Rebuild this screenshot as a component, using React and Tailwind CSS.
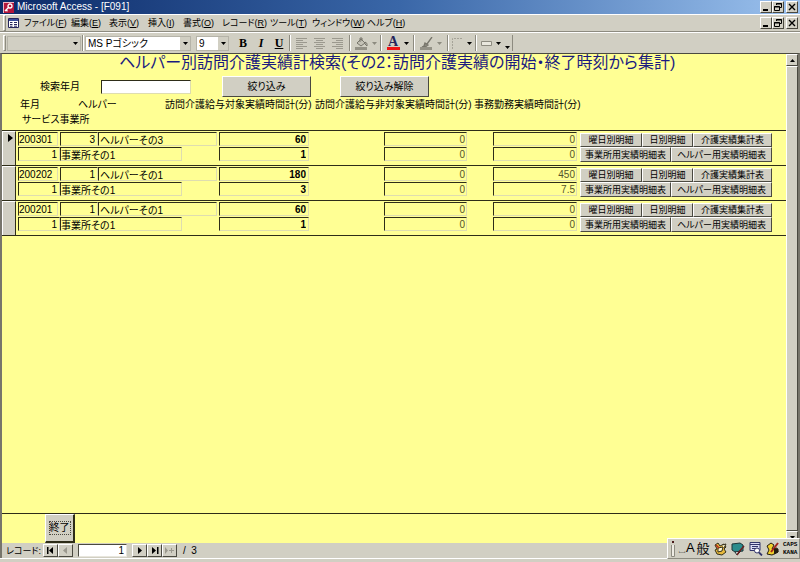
import clsx from 'clsx';

const menus = [
  { label: 'ファイル', hotkey: 'F', width: 'w-[47px]' },
  { label: '編集', hotkey: 'E', width: 'w-[38px]' },
  { label: '表示', hotkey: 'V', width: 'w-[39px]' },
  { label: '挿入', hotkey: 'I', width: 'w-[35px]' },
  { label: '書式', hotkey: 'O', width: 'w-[39px]' },
  { label: 'レコード', hotkey: 'R', width: 'w-[48px]' },
  { label: 'ツール', hotkey: 'T', width: 'w-[42px]' },
  { label: 'ウィンドウ', hotkey: 'W', width: 'w-[55px]' },
  { label: 'ヘルプ', hotkey: 'H', width: 'w-[40px]' },
];

const records = [
  { month: '200301', helperId: '3', helper: 'ヘルパーその3', officeId: '1', office: '事業所その1', covered: ['60', '1'], uncovered: ['0', '0'], clerical: ['0', '0'] },
  { month: '200202', helperId: '1', helper: 'ヘルパーその1', officeId: '1', office: '事業所その1', covered: ['180', '3'], uncovered: ['0', '0'], clerical: ['450', '7.5'] },
  { month: '200201', helperId: '1', helper: 'ヘルパーその1', officeId: '1', office: '事業所その1', covered: ['60', '1'], uncovered: ['0', '0'], clerical: ['0', '0'] },
];

const raised = 'bg-[#d1cfc3] border border-t-white border-l-white border-r-[#4a4940] border-b-[#4a4940]';

const Arrow = ({ className = 'fill-black' }) => (
  <svg viewBox="0 0 5 3" className={clsx('h-[3px] w-[5px] shrink-0', className)}>
    <path d="M0 0h5L2.5 3z" />
  </svg>
);

const Separator = () => <div className="mx-px h-4 w-0.5 shrink-0 border-l border-r border-l-[#8d8b80] border-r-white" />;

const Grip = () => <div className="h-4 w-[3px] shrink-0 border border-t-white border-l-white border-r-[#8d8b80] border-b-[#8d8b80]" />;

const WindowButtons = () => (
  <div className="flex h-[12px] shrink-0">
    <button aria-label="最小化" className={clsx(raised, 'flex w-[12px] items-end justify-center')}>
      <svg viewBox="0 0 10 10" className="h-[10px] w-[10px]"><path d="M2 7h5v2H2z" /></svg>
    </button>
    <button aria-label="元に戻す" className={clsx(raised, 'flex w-[12px] items-center justify-center')}>
      <svg viewBox="0 0 10 10" className="h-[10px] w-[10px]" fill="none" stroke="#000">
        <path d="M3.5 3V1.5h5v4H7M3 2h6M1.5 4.5h5v4h-5zM1 5h6" />
      </svg>
    </button>
    <button aria-label="閉じる" className={clsx(raised, 'ml-0.5 flex w-[12px] items-center justify-center')}>
      <svg viewBox="0 0 10 10" className="h-[10px] w-[10px]" stroke="#000" strokeWidth="1.4"><path d="M2 2l6 6M8 2L2 8" /></svg>
    </button>
  </div>
);

const TitleBar = () => (
  <div className="flex h-[14px] items-center bg-linear-to-r from-[#0d2a68] via-[#3a67a8] to-[#9cc2ee] pr-0.5 pl-[3px]">
    <svg viewBox="0 0 11 11" className="mr-[3px] h-[11px] w-[11px]">
      <path d="M0 0h11v11H0z" fill="#b3163c" />
      <path d="M0 0h11v1H1v10H0z" fill="#f0b5c2" />
      <circle cx="7" cy="4" r="2" fill="none" stroke="#fff" strokeWidth="1.3" />
      <path d="M5.5 5.5L2 9M3 8l1.5 1.3" stroke="#fff" strokeWidth="1.4" />
    </svg>
    <h1 className="flex-1 text-[10px] leading-[14px] text-white">Microsoft Access - [F091]</h1>
    <WindowButtons />
  </div>
);

const MenuBar = () => (
  <div className="flex h-[18px] items-center border-t border-b border-t-white border-b-[#8d8b80] pr-0.5 pl-[3px]">
    <Grip />
    <svg viewBox="0 0 11 10" className="mr-[5px] ml-0.5 h-[10px] w-[11px]">
      <path d="M.5 .5h10v9H.5z" fill="#fff" stroke="#26265c" />
      <path d="M1 1h9v2H1z" fill="#3b4f9c" />
      <path d="M2 4.5h2.500M2 6.500h2.500M2 8.200h2.500M6 4.500h3M6 6.500h3M6 8.200h3" stroke="#26265c" />
    </svg>
    <nav className="flex flex-1 text-[9px] leading-[14px]">
      {menus.map(menu => (
        <button key={menu.hotkey} className={clsx(menu.width, 'shrink-0 text-left whitespace-nowrap')}>
          {menu.label}(<u>{menu.hotkey}</u>)
        </button>
      ))}
    </nav>
    <WindowButtons />
  </div>
);

const Combo = ({ label, value, className }) => (
  <div className={clsx('relative h-[15px] shrink-0 border border-[#b5b3a8]', className)}>
    <select aria-label={label} className="block h-[13px] w-full appearance-none pl-0.5 text-[10px] leading-[13px] outline-none">
      <option>{value}</option>
    </select>
    <span className="pointer-events-none absolute inset-y-0 right-0 flex w-[10px] items-center justify-center bg-[#d1cfc3]">
      <Arrow />
    </span>
  </div>
);

const AlignButton = ({ label, d }) => (
  <button aria-label={label} className="flex w-[18px] justify-center">
    <svg viewBox="0 0 12 11" className="h-[11px] w-[12px]" stroke="#9b998e"><path d={d} /></svg>
  </button>
);

const Toolbar = () => (
  <div className="flex h-[21px] items-center border-t border-t-white pl-[3px]">
    <Grip />
    <Combo label="オブジェクト" value="" className="ml-px w-[74px] bg-[#d1cfc3]" />
    <Separator />
    <Combo label="フォント" value="MS Pゴシック" className="w-[106px] bg-white" />
    <Combo label="フォント サイズ" value="9" className="ml-[5px] w-[33px] bg-white" />
    <div className="ml-[5px] flex font-['Liberation_Serif',serif] text-[12px] leading-4 font-bold">
      <button className="w-[18px]">B</button>
      <button className="w-[18px] italic">I</button>
      <button className="w-[18px] underline">U</button>
    </div>
    <Separator />
    <div className="flex px-px">
      <AlignButton label="左揃え" d="M0 .5h11M0 2.500h7M0 4.500h11M0 6.500h7M0 8.500h11M0 10.500h7" />
      <AlignButton label="中央揃え" d="M0 .5h11M2 2.500h7M0 4.500h11M2 6.500h7M0 8.500h11M2 10.500h7" />
      <AlignButton label="右揃え" d="M0 .5h11M4 2.500h7M0 4.500h11M4 6.500h7M0 8.500h11M4 10.500h7" />
    </div>
    <Separator />
    <button aria-label="塗りつぶしの色" className="flex w-[27px] items-center justify-center gap-1">
      <svg viewBox="0 0 13 13" className="h-[13px] w-[13px]">
        <path d="M2 6l4-4 4 4-4 3z" fill="#c4c2b6" stroke="#77756b" />
        <path d="M5 5V1h2v3M10 5q3 1 2 4l-2-2z" fill="none" stroke="#77756b" />
        <path d="M0 10h12v3H0z" fill="#949287" />
      </svg>
      <Arrow className="fill-[#8d8b80]" />
    </button>
    <Separator />
    <button aria-label="フォントの色" className="flex w-[29px] items-center justify-center gap-1">
      <span className="h-[13px] w-[13px] border-b-3 border-[#f01414] font-['Liberation_Serif',serif] text-[14px] leading-[10px] font-bold text-[#26265c]">A</span>
      <Arrow />
    </button>
    <Separator />
    <button aria-label="線/境界線の色" className="flex w-[30px] items-center justify-center gap-1">
      <svg viewBox="0 0 13 13" className="h-[13px] w-[13px]">
        <path d="M12 0L7 7M5 6l3 2-3 2H2l2-1z" fill="#8d8b80" stroke="#77756b" strokeWidth="1.3" />
        <path d="M0 10h12v3H0z" fill="#949287" />
      </svg>
      <Arrow className="fill-[#8d8b80]" />
    </button>
    <Separator />
    <button aria-label="線/境界線の幅" className="flex w-[24px] items-center justify-center gap-1">
      <svg viewBox="0 0 11 11" className="h-[11px] w-[11px]" fill="none" stroke="#a5a398"><path d="M.5 11V.5H11" strokeDasharray="2 1" /></svg>
      <Arrow />
    </button>
    <Separator />
    <button aria-label="特殊効果" className="flex w-[25px] items-center justify-center gap-1">
      <svg viewBox="0 0 11 5" className="h-[5px] w-[11px]"><path d="M.5 .5h10v4H.5z" fill="#e9e7dd" stroke="#8d8b80" /></svg>
      <Arrow />
    </button>
    <button aria-label="その他のボタン" className="flex h-4 w-[10px] items-end justify-center border-r border-[#8d8b80] pb-0.5"><Arrow /></button>
  </div>
);

const FormButton = ({ className, children }) => (
  <button className={clsx(raised, 'shrink-0 overflow-hidden whitespace-nowrap', className)}>{children}</button>
);

const Field = ({ label, value, className }) => (
  <input
    aria-label={label}
    defaultValue={value}
    readOnly
    className={clsx('h-[14px] shrink-0 border border-t-[#2e2d18] border-l-[#2e2d18] border-r-[#deddb0] border-b-[#deddb0] text-[10px] leading-3 outline-none', className)}
  />
);

const FormHeader = () => (
  <header className="h-[77px] border-b border-[#2e2d18]">
    <h2 className="pl-[117px] text-[16px] leading-[18px] whitespace-nowrap text-[#1a1a80]">
      ヘルパー別訪問介護実績計検索(その2：訪問介護実績の開始・終了時刻から集計)
    </h2>
    <div className="flex items-center pt-1 pl-[38px] text-[10px] leading-3">
      <label htmlFor="month" className="w-[61px]">検索年月</label>
      <input id="month" className="h-[14px] w-[90px] border border-t-[#2e2d18] border-l-[#2e2d18] border-r-[#deddb0] border-b-[#deddb0] bg-white" />
      <FormButton className="ml-[31px] h-[21px] w-[89px]">絞り込み</FormButton>
      <FormButton className="ml-[29px] h-[21px] w-[89px]">絞り込み解除</FormButton>
    </div>
    <div className="flex pt-0.5 pl-[18px] text-[10px] leading-3 whitespace-nowrap">
      <span className="w-[58px] shrink-0">年月</span>
      <span className="w-[87px] shrink-0">ヘルパー</span>
      <span className="w-[150px] shrink-0">訪問介護給与対象実績時間計(分)</span>
      <span className="w-[159px] shrink-0">訪問介護給与非対象実績時間計(分)</span>
      <span>事務勤務実績時間計(分)</span>
    </div>
    <div className="pt-[3px] pl-5 text-[10px] leading-3">サービス事業所</div>
  </header>
);

const Totals = ({ record, line }) => (
  <>
    <Field label="給与対象" value={record.covered[line]} className="w-[90px] pr-0.5 text-right font-bold" />
    <Field label="給与非対象" value={record.uncovered[line]} className="ml-[75px] w-[83px] pr-px text-right text-[#55542c]" />
    <Field label="事務勤務" value={record.clerical[line]} className="ml-[26px] mr-[3px] w-[84px] pr-px text-right text-[#55542c]" />
  </>
);

const RecordRow = ({ record, current }) => (
  <div className="flex border-b border-[#2e2d18]">
    <div className="w-[14px] shrink-0 border-t border-l border-r border-t-white border-l-white border-r-[#2e2d18] bg-[#d1cfc3]">
      {current && (
        <svg viewBox="0 0 5 8" className="mt-0.5 ml-[5px] h-[8px] w-[5px]"><path d="M0 0l5 4-5 4z" /></svg>
      )}
    </div>
    <div className="pt-px pb-[3px] pl-0.5">
      <div className="flex h-[15px]">
        <Field label="年月" value={record.month} className="mr-0.5 w-[40px]" />
        <Field label="ヘルパーコード" value={record.helperId} className="w-[38px] pr-0.5 text-right" />
        <Field label="ヘルパー" value={record.helper} className="mr-[2px] w-[119px] pl-px" />
        <Totals record={record} line={0} />
        <div className="flex pt-px text-[9px] leading-3">
          <FormButton className="h-[14px] w-[62px]">曜日別明細</FormButton>
          <FormButton className="h-[14px] w-[51px]">日別明細</FormButton>
          <FormButton className="h-[14px] w-[79px]">介護実績集計表</FormButton>
        </div>
      </div>
      <div className="flex h-[15px]">
        <Field label="事業所コード" value={record.officeId} className="w-[42px] pr-0.5 text-right" />
        <Field label="サービス事業所" value={record.office} className="mr-[37px] w-[122px]" />
        <Totals record={record} line={1} />
        <div className="flex text-[9px] leading-3">
          <FormButton className="h-[15px] w-[91px]">事業所用実績明細表</FormButton>
          <FormButton className="h-[15px] w-[101px]">ヘルパー用実績明細表</FormButton>
        </div>
      </div>
    </div>
  </div>
);

const ScrollBar = () => (
  <div className="flex w-[12px] shrink-0 flex-col bg-[#e8e6dd]">
    <button aria-label="上へ" className={clsx(raised, 'flex h-[12px] items-center justify-center')}><Arrow className="rotate-180 fill-black" /></button>
    <div className={clsx(raised, 'flex-1')} />
    <button aria-label="下へ" className={clsx(raised, 'flex h-[12px] items-center justify-center')}><Arrow /></button>
  </div>
);

const NavButton = ({ label, d, dim }) => (
  <button aria-label={label} className={clsx(raised, 'flex h-[13px] w-[15px] shrink-0 items-center justify-center')}>
    <svg viewBox="0 0 11 7" className={clsx('h-[7px] w-[11px]', dim ? 'fill-[#9b998e]' : 'fill-black')}><path d={d} /></svg>
  </button>
);

const RecordNav = () => (
  <div className="flex h-[15px] items-center pl-1 text-[10px] leading-3">
    <label htmlFor="record" className="w-[37px] shrink-0 text-[9px] whitespace-nowrap">レコード:</label>
    <NavButton label="先頭" d="M2 0h1.500v7H2zM8 0v7L4 3.500z" />
    <NavButton label="前へ" d="M7 0v7L3 3.500z" dim />
    <input id="record" defaultValue="1" className="mx-[5px] h-[13px] w-[49px] border border-t-[#4a4940] border-l-[#4a4940] border-[#e8e6dd] bg-white pr-0.5 text-right" />
    <NavButton label="次へ" d="M4 0v7l4-3.500z" />
    <NavButton label="最後" d="M3 0v7l4-3.500zM8 0h1.500v7H8z" />
    <NavButton label="新規" d="M1 0v7l3-3.500zM5 3h2V1h1v2h2v1H8v2H7V4H5z" dim />
    <span className="pl-[6px]">/&nbsp; 3</span>
  </div>
);

const ImeBar = () => (
  <div className="absolute right-0 bottom-[3px] flex h-[21px] w-[133px] items-center border border-t-white border-l-white border-r-[#8d8b80] border-b-[#8d8b80] bg-[#d1cfc3] pl-[3px]">
    <svg viewBox="0 0 4 16" className="h-4 w-[4px]">
      <path d="M1 0h2v2H1z" fill="#4a1a1a" />
      <path d="M.5 4v11.500h3V4" fill="#eeece4" stroke="#8d8b80" />
    </svg>
    <button className="ml-[3px] w-[16px] text-right text-[13px] leading-4"><span className="text-[8px]">␣</span>A</button>
    <button className="ml-px w-[16px] text-[13px] leading-4">般</button>
    <svg viewBox="0 0 14 14" className="ml-[3px] h-[14px] w-[14px]" stroke="#33301c">
      <path d="M1 3l3-2 2 3 4-2 2 3-2 2 2 3-4 3-5-1-2-4 2-1z" fill="#e8b93c" />
      <path d="M4 6l5-1-1 4-4 1zM8 3l4-1-2 4" fill="#fff6d0" />
      <path d="M2 3l3 3" stroke="#b02a20" strokeWidth="1.500" />
    </svg>
    <svg viewBox="0 0 14 14" className="ml-[3px] h-[14px] w-[14px]" stroke="#1c3538">
      <path d="M1 2l8-1 3 2v6l-8 1-3-2z" fill="#2b8c8c" />
      <path d="M4 10l6-1-4 4z" fill="#fff" />
      <path d="M13 4l-5 6-2 3" stroke="#6b2020" strokeWidth="1.500" fill="none" />
    </svg>
    <svg viewBox="0 0 14 14" className="ml-[4px] h-[14px] w-[14px]" stroke="#33356b">
      <path d="M1 .5h10v8H1z" fill="#dcdcf4" />
      <path d="M1 2.500h10M3 4.500h6M3 6.500h6" />
      <circle cx="8" cy="8.500" r="2.500" fill="#fff" />
      <path d="M10 10.500l3 3" strokeWidth="1.800" />
    </svg>
    <svg viewBox="0 0 14 14" className="ml-[3px] h-[14px] w-[14px]" stroke="#241c10">
      <path d="M1 4l4-3 3 2-2 4 5-1 1 4-6 3-5-1 2-4z" fill="#f0cf2c" />
      <path d="M12 1L5 10" stroke="#a3241c" strokeWidth="2" />
      <path d="M8 7h4v3l-4 2" fill="#241c10" />
    </svg>
    <div className="ml-[3px] flex flex-col font-['Liberation_Mono',monospace] text-[6px] leading-[8px] font-bold">
      <button>CAPS</button>
      <button>KANA</button>
    </div>
  </div>
);

export default function App() {
  return (
    <div className="relative flex min-h-screen flex-col overflow-hidden bg-[#d1cfc3] font-['Liberation_Sans','Noto_Sans_CJK_JP',sans-serif] text-black [font-feature-settings:'palt']">
      <TitleBar />
      <MenuBar />
      <Toolbar />
      <div className="flex flex-1 flex-col border-t border-r-2 border-l-2 border-t-[#4a4940] border-r-[#77756b] border-l-[#77756b]">
        <div className="flex flex-1">
          <main className="flex min-w-0 flex-1 flex-col bg-[#ffff94]">
            <FormHeader />
            {records.map((record, index) => (
              <RecordRow key={record.month} record={record} current={index === 0} />
            ))}
            <footer className="mt-auto border-t border-[#2e2d18] pl-[43px]">
              <button className="block h-[29px] w-[30px] border border-t-white border-l-white border-r-2 border-b-2 border-r-[#2e2d18] border-b-[#2e2d18] bg-[#d1cfc3] text-[10px] leading-3">
                <span className="inline-block border border-dotted border-[#4a4940]">終了</span>
              </button>
            </footer>
          </main>
          <ScrollBar />
        </div>
        <RecordNav />
      </div>
      <div className="h-[4px] border-t border-t-white" />
      <ImeBar />
    </div>
  );
}
